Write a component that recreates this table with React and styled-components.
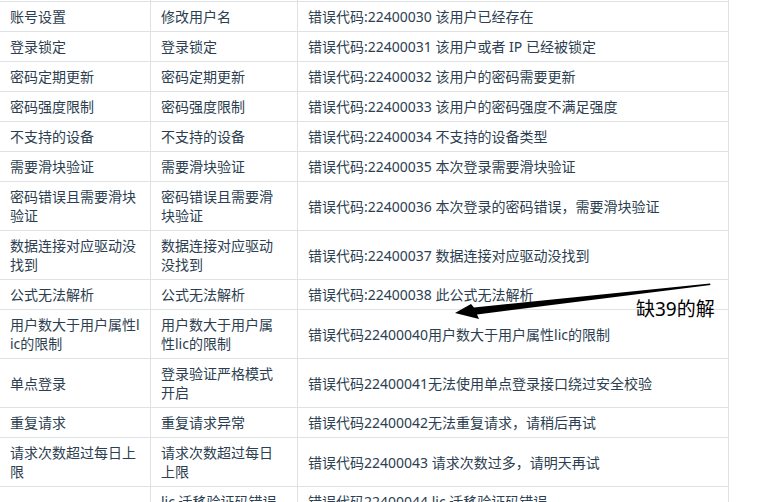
import React from "react";
import styled, { createGlobalStyle } from "styled-components";

const rows = [
	["\u00a0", "\u00a0", "\u00a0"],
	["账号设置", "修改用户名", "错误代码:22400030 该用户已经存在"],
	["登录锁定", "登录锁定", "错误代码:22400031 该用户或者 IP 已经被锁定"],
	["密码定期更新", "密码定期更新", "错误代码:22400032 该用户的密码需要更新"],
	["密码强度限制", "密码强度限制", "错误代码:22400033 该用户的密码强度不满足强度"],
	["不支持的设备", "不支持的设备", "错误代码:22400034 不支持的设备类型"],
	["需要滑块验证", "需要滑块验证", "错误代码:22400035 本次登录需要滑块验证"],
	["密码错误且需要滑块验证", "密码错误且需要滑块验证", "错误代码:22400036 本次登录的密码错误，需要滑块验证"],
	["数据连接对应驱动没找到", "数据连接对应驱动没找到", "错误代码:22400037 数据连接对应驱动没找到"],
	["公式无法解析", "公式无法解析", "错误代码:22400038 此公式无法解析"],
	["用户数大于用户属性lic的限制", "用户数大于用户属性lic的限制", "错误代码22400040用户数大于用户属性lic的限制"],
	["单点登录", "登录验证严格模式开启", "错误代码22400041无法使用单点登录接口绕过安全校验"],
	["重复请求", "重复请求异常", "错误代码22400042无法重复请求，请稍后再试"],
	["请求次数超过每日上限", "请求次数超过每日上限", "错误代码22400043 请求次数过多，请明天再试"],
	["", "lic 迁移验证码错误", "错误代码22400044 lic 迁移验证码错误"]
];

const App = () => (
	<>
		<GlobalStyle />
		<Page>
			<Table>
				{rows.map((row, i) =>
					row.map((text, j) => (
						<Cell key={`${i}-${j}`} $col={j}>
							{text}
						</Cell>
					))
				)}
			</Table>
			<Arrow viewBox="0 0 771 502" width="771" height="502">
				<polygon points="455,313 471,304 474,307.5 710,283.5 710.5,285 477,314.5 479,319" fill="#000" />
			</Arrow>
			<Note>缺39的解</Note>
		</Page>
	</>
);

const GlobalStyle = createGlobalStyle`
	body {
		margin: 0;
		background: #fff;
		font-family: "Noto Sans", "Noto Sans CJK SC", sans-serif;
	}
`;

const Page = styled.div`
	position: relative;
	display: flow-root;
	width: 771px;
	height: 502px;
	overflow: hidden;
`;

const Table = styled.div`
	display: grid;
	grid-template-columns: 151px 147px 431px;
	margin-top: -28px;
	font-size: 14px;
	line-height: 19px;
	color: #2c3e50;
`;

const Cell = styled.div`
	display: flex;
	align-items: center;
	box-sizing: border-box;
	min-height: 29px;
	padding: 5px ${(p) => (p.$col === 1 ? "12px" : "10px")} 5px 10px;
	border-right: 1px solid #dfe2e5;
	border-bottom: 1px solid #dfe2e5;
	word-break: break-all;
`;

const Arrow = styled.svg`
	position: absolute;
	left: 0;
	top: 0;
	pointer-events: none;
`;

const Note = styled.div`
	position: absolute;
	left: 636px;
	top: 298px;
	font-size: 19px;
	line-height: 22px;
	color: #000;
	font-family: "Noto Sans", "Noto Sans CJK SC", sans-serif;
`;

export default App;
